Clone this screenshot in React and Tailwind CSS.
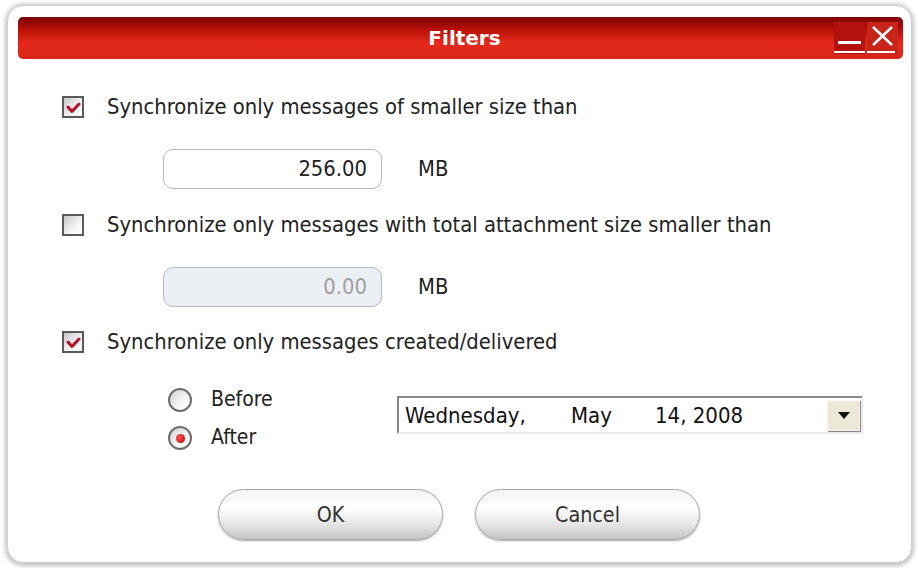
import React from 'react'

const FONT = { fontFamily: '"DejaVu Sans Condensed", "DejaVu Sans", sans-serif' }

function CheckBox({ checked }) {
    return (
        <div className="w-[22px] h-[22px] shrink-0 border-2 border-[#5a5a5a] bg-[linear-gradient(135deg,#c8c8c8,#f4f4f4_60%,#ffffff)] flex items-end justify-center pb-[2px]">
            {checked && (
                <svg width="15" height="12" viewBox="0 0 15 12">
                    <path d="M2 5 L6 9.5 L13 2" fill="none" stroke="#b8102a" strokeWidth="3" strokeLinecap="round" strokeLinejoin="round" />
                </svg>
            )}
        </div>
    )
}

function Radio({ checked }) {
    return (
        <div className="w-[24px] h-[24px] shrink-0 rounded-full border-2 border-[#6e6e6e] bg-[linear-gradient(135deg,#d0d0d0,#f6f6f6_60%,#ffffff)] flex items-center justify-center">
            {checked && <div className="w-[9px] h-[9px] rounded-full bg-[radial-gradient(circle_at_35%_35%,#ff5050,#c00000)]" />}
        </div>
    )
}

function NumberBox({ value, disabled }) {
    return (
        <div className="flex items-center ml-[101px]">
            <div className={`w-[219px] h-[40px] rounded-[10px] border border-[#b8b8b8] flex items-center justify-end pr-[14px] text-[21.8px] ${disabled ? 'bg-[#eceff4] text-[#a0a0a0]' : 'bg-white text-[#222]'}`}>
                {value}
            </div>
            <span className="ml-[36px] text-[21.8px] text-[#222]">MB</span>
        </div>
    )
}

function PillButton({ label }) {
    return (
        <button className="w-[225px] h-[51px] rounded-full border border-[#a8a8a8] bg-[linear-gradient(to_bottom,#f4f4f4,#ffffff_35%,#e6e6e6_70%,#c4c4c4)] shadow-[0_1px_2px_rgba(0,0,0,0.35)] text-[21.3px] text-[#333]">
            {label}
        </button>
    )
}

export default function App() {
    return (
        <div className="w-[918px] h-[568px] bg-white pt-[5px] pl-[7px]" style={FONT}>
            <div className="w-[905px] h-[558px] rounded-[16px] bg-white border border-[#d0d0d0] shadow-[0_1px_4px_2px_rgba(0,0,0,0.24)] pt-[11px] pl-[10px] pr-[8px]">
                {/* title bar */}
                <div className="h-[42px] rounded-[5px] bg-[linear-gradient(to_bottom,#7a0000,#b81008_30%,#e52a1c_62%,#d8261a)] flex items-center relative">
                    <div className="flex-1 text-center pl-[8px] text-white font-bold text-[20px]" style={{ fontFamily: '"DejaVu Sans", sans-serif' }}>Filters</div>
                    <div className="absolute right-[5px] top-[5px] flex gap-[2px]">
                        <div className="w-[31px] h-[32px] bg-[#b3120c]">
                            <svg width="31" height="32" viewBox="0 0 31 32">
                                <rect x="4" y="19" width="23" height="3" fill="#fff" />
                                <rect x="0" y="29" width="31" height="2" fill="#fff" />
                            </svg>
                        </div>
                        <div className="w-[31px] h-[32px] bg-[#c8241a]">
                            <svg width="31" height="32" viewBox="0 0 31 32">
                                <path d="M6 5 L25 23 M25 5 L6 23" stroke="#fff" strokeWidth="2.5" />
                                <rect x="0" y="29" width="28" height="2" fill="#fff" />
                            </svg>
                        </div>
                    </div>
                </div>

                <div className="pl-[44px] text-[#222]">
                    <div className="flex items-center h-[24px] mt-[36px]">
                        <CheckBox checked />
                        <span className="ml-[23px] text-[21.8px]">Synchronize only messages of smaller size than</span>
                    </div>
                    <div className="mt-[30px]">
                        <NumberBox value="256.00" />
                    </div>
                    <div className="flex items-center h-[24px] mt-[24px]">
                        <CheckBox />
                        <span className="ml-[23px] text-[21.8px]">Synchronize only messages with total attachment size smaller than</span>
                    </div>
                    <div className="mt-[30px]">
                        <NumberBox value="0.00" disabled />
                    </div>
                    <div className="flex items-center h-[24px] mt-[23px]">
                        <CheckBox checked />
                        <span className="ml-[23px] text-[21.8px]">Synchronize only messages created/delivered</span>
                    </div>

                    <div className="flex mt-[34px] ml-[106px]">
                        <div className="w-[229px] flex flex-col gap-[14px]">
                            <div className="flex items-center h-[24px]">
                                <Radio />
                                <span className="ml-[19px] text-[21px]">Before</span>
                            </div>
                            <div className="flex items-center h-[24px]">
                                <Radio checked />
                                <span className="ml-[19px] text-[21px]">After</span>
                            </div>
                        </div>
                        <div className="mt-[8px] w-[466px] h-[38px] border-t-2 border-l-2 border-[#8a8a8a] border-b-2 border-r-2 border-b-[#ececec] border-r-[#ececec] bg-white flex items-center pl-[6px] pr-[1px] text-[22px] text-[#111]">
                            <span className="w-[166px]">Wednesday,</span>
                            <span className="w-[84px]">May</span>
                            <span className="flex-1">14, 2008</span>
                            <div className="w-[33px] h-[31px] bg-[#ece9d8] border border-[#f8f8f8] shadow-[1px_1px_0_#8a8a8a] flex items-center justify-center">
                                <svg width="12" height="7" viewBox="0 0 12 7"><path d="M0 0 H12 L6 7 Z" fill="#111" /></svg>
                            </div>
                        </div>
                    </div>
                </div>

                <div className="flex gap-[32px] ml-[200px] mt-[39px]">
                    <PillButton label="OK" />
                    <PillButton label="Cancel" />
                </div>
            </div>
        </div>
    )
}
